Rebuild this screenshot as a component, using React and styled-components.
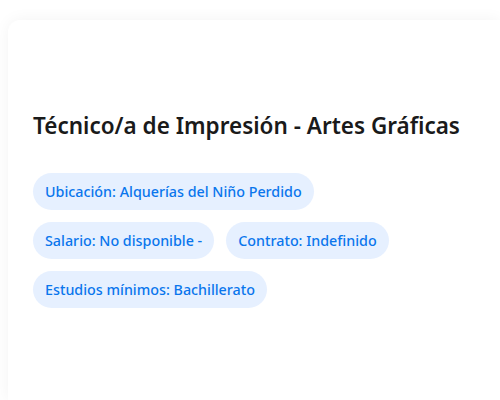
import styled, { createGlobalStyle } from "styled-components";

const GlobalStyle = createGlobalStyle`
  body {
    margin: 0;
    background: #ffffff;
    font-family: "Noto Sans", "Open Sans", "Liberation Sans", sans-serif;
    overflow: hidden;
  }
`;

const tags = [
  "Ubicación: Alquerías del Niño Perdido",
  "Salario: No disponible -",
  "Contrato: Indefinido",
  "Estudios mínimos: Bachillerato",
];

export default function App() {
  return (
    <Page>
      <GlobalStyle />
      <Card>
        <Title>Técnico/a de Impresión - Artes Gráficas</Title>
        <Tags>
          {tags.map((t) => (
            <Tag key={t}>{t}</Tag>
          ))}
        </Tags>
      </Card>
    </Page>
  );
}

const Page = styled.div`
  padding: 20px 0 0 8px;
  width: 500px;
  height: 400px;
  box-sizing: border-box;
  overflow: hidden;
`;

const Card = styled.div`
  background: #ffffff;
  border-radius: 12px 0 0 0;
  box-shadow: 0 0 16px rgba(0, 0, 0, 0.05);
  padding: 90px 25px 0;
  height: 380px;
  box-sizing: border-box;
`;

const Title = styled.h2`
  margin: 0 0 31px;
  font-size: 22.5px;
  font-weight: 600;
  line-height: 32px;
  color: #1a1a1a;
`;

const Tags = styled.div`
  display: flex;
  flex-wrap: wrap;
  gap: 12px;
  width: 420px;
`;

const Tag = styled.span`
  display: inline-block;
  padding: 8px 12px;
  border-radius: 20px;
  background: #e6f0ff;
  color: #0a76ed;
  font-size: 14.3px;
  font-weight: 500;
  line-height: 21px;
`;
